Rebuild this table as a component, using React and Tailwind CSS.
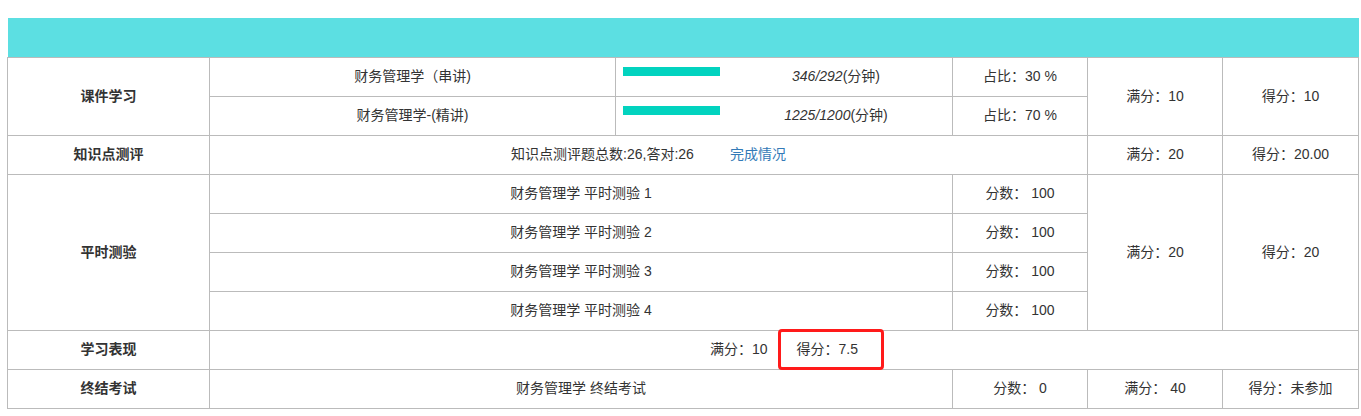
const td = "border border-[#bbbbbb] text-center align-middle h-[39px] p-0";

function Progress({ used, total }) {
  return (
    <div className="flex h-[38px]">
      <div className="mt-[9px] ml-[7px] h-[9px] w-[97px] bg-[#02d3bf]" />
      <div className="flex-1 flex items-center justify-center">
        <span>
          <i>{used}/{total}</i>(分钟)
        </span>
      </div>
    </div>
  );
}

export default function App() {
  const quizzes = [1, 2, 3, 4];
  return (
    <div
      className="bg-white w-[1361px] h-[416px] pt-[18px] pl-[7px] text-[14px] text-[#333333]"
      style={{ fontFamily: '"Liberation Sans", "Noto Sans CJK SC", sans-serif' }}
    >
      <table className="w-[1351px] table-fixed border-collapse">
        <colgroup>
          <col className="w-[202px]" />
          <col className="w-[406px]" />
          <col className="w-[337px]" />
          <col className="w-[135px]" />
          <col className="w-[135px]" />
          <col className="w-[136px]" />
        </colgroup>
        <tbody>
          <tr>
            <td colSpan={6} className="h-[39px] bg-[#5cdfe2] p-0" />
          </tr>
          <tr>
            <td rowSpan={2} className={td + " font-bold"}>课件学习</td>
            <td className={td}>财务管理学（串讲)</td>
            <td className={td + " align-top"}>
              <Progress used="346" total="292" />
            </td>
            <td className={td}>占比：30 %</td>
            <td rowSpan={2} className={td}>满分：10</td>
            <td rowSpan={2} className={td}>得分：10</td>
          </tr>
          <tr>
            <td className={td}>财务管理学-(精讲)</td>
            <td className={td + " align-top"}>
              <Progress used="1225" total="1200" />
            </td>
            <td className={td}>占比：70 %</td>
          </tr>
          <tr>
            <td className={td + " font-bold"}>知识点测评</td>
            <td colSpan={3} className={td}>
              知识点测评题总数:26,答对:26
              <a className="ml-[36px] text-[#337ab7]">完成情况</a>
            </td>
            <td className={td}>满分：20</td>
            <td className={td}>得分：20.00</td>
          </tr>
          {quizzes.map((n, i) => (
            <tr key={n}>
              {i === 0 && (
                <td rowSpan={4} className={td + " font-bold"}>平时测验</td>
              )}
              <td colSpan={2} className={td}>财务管理学 平时测验 {n}</td>
              <td className={td}>分数：&nbsp;100</td>
              {i === 0 && (
                <>
                  <td rowSpan={4} className={td}>满分：20</td>
                  <td rowSpan={4} className={td}>得分：20</td>
                </>
              )}
            </tr>
          ))}
          <tr>
            <td className={td + " font-bold"}>学习表现</td>
            <td colSpan={5} className={td}>
              <span>满分：10</span>
              <span className="relative ml-[29px]">
                得分：7.5
                <span className="absolute left-[-19px] right-[-26px] top-[-12px] bottom-[-13px] border-[3px] border-[#ff1a1a] rounded-[4px]" />
              </span>
            </td>
          </tr>
          <tr>
            <td className={td + " font-bold"}>终结考试</td>
            <td colSpan={2} className={td}>财务管理学 终结考试</td>
            <td className={td}>分数：&nbsp;0</td>
            <td className={td}>满分：&nbsp;40</td>
            <td className={td}>得分：未参加</td>
          </tr>
        </tbody>
      </table>
    </div>
  );
}
